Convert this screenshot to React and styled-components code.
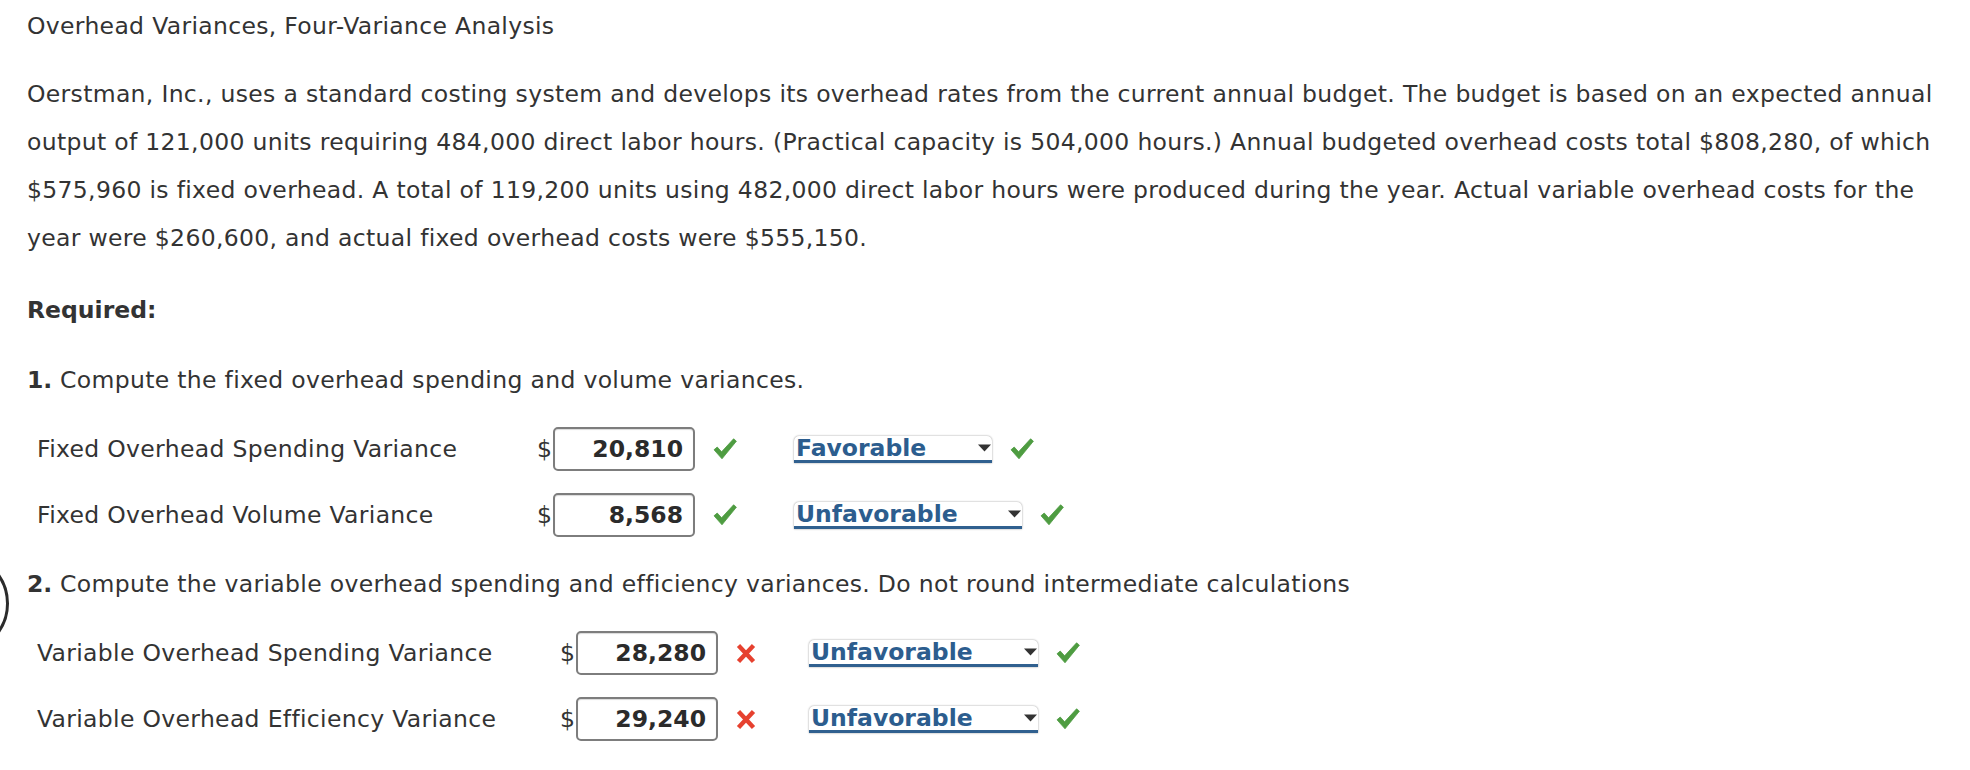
import React from "react";
import styled, { createGlobalStyle } from "styled-components";

const Global = createGlobalStyle`
  html, body { margin: 0; padding: 0; background: #fff; }
  body { font-family: "DejaVu Sans", Verdana, sans-serif; color: #333; }
`;

const Page = styled.div`
  position: relative;
  width: 1970px;
  height: 770px;
  box-sizing: border-box;
  padding: 2px 8px 0 27px;
  overflow: hidden;
  font-size: 23.5px;
  line-height: 48px;
  letter-spacing: 0.32px;
`;

const EdgeCircle = styled.div`
  position: absolute;
  left: -92px;
  top: 553px;
  width: 95px;
  height: 95px;
  border: 3.5px solid #2b2b2b;
  border-radius: 50%;
`;

const Title = styled.div``;

const Para = styled.p`
  margin: ${(p) => p.$mt}px 0 0 0;
`;

const Strong = styled.b`
  font-weight: 700;
  letter-spacing: 0;
`;

const Table = styled.div`
  display: flex;
  flex-direction: column;
  gap: 22px;
  margin-top: 23px;
`;

const Row = styled.div`
  display: flex;
  align-items: center;
  height: 44px;
`;

const Label = styled.div`
  width: ${(p) => p.$w}px;
  padding-left: 10px;
  box-sizing: border-box;
  flex: none;
  line-height: 44px;
`;

const Dollar = styled.span`
  width: 16px;
  flex: none;
  line-height: 44px;
`;

const ValueBox = styled.div`
  width: 142px;
  height: 44px;
  box-sizing: border-box;
  border: 2px solid #7d7d7d;
  border-radius: 5px;
  background: #fff;
  box-shadow: inset 0 1px 1px rgba(0, 0, 0, 0.15);
  display: flex;
  align-items: center;
  justify-content: flex-end;
  padding-right: 10px;
  font-weight: 700;
  letter-spacing: 0;
  color: #2b2b2b;
  flex: none;
`;

const Mark = styled.span`
  display: inline-flex;
  margin-left: ${(p) => p.$ml}px;
  flex: none;
`;

const Select = styled.div`
  display: flex;
  align-items: center;
  width: ${(p) => p.$w}px;
  margin-left: ${(p) => p.$ml}px;
  height: 27px;
  box-sizing: border-box;
  padding: 0 1px 0 2px;
  background: #fff;
  border-radius: 5px 5px 0 0;
  box-shadow: 0 0 2px rgba(0, 0, 0, 0.45);
  border-bottom: 3px solid #30608f;
  font-weight: 700;
  letter-spacing: 0;
  color: #2c5d8e;
  line-height: 24px;
  flex: none;
  white-space: nowrap;
`;

const SelectText = styled.span`
  flex: 1;
`;

const Check = ({ ml }) => (
  <Mark $ml={ml}>
    <svg width="24" height="22" viewBox="0 0 24 22">
      <path
        d="M1 11.8 L4.2 9 L8.6 13.8 L20.6 0.8 L23.4 3.2 L9 20.8 Z"
        fill="#4e9c41"
        stroke="#4e9c41"
        strokeWidth="0.8"
        strokeLinejoin="round"
      />
    </svg>
  </Mark>
);

const Cross = ({ ml }) => (
  <Mark $ml={ml}>
    <svg width="20" height="19" viewBox="0 0 20 19">
      <path
        d="M2.5 1.5 L17.5 17.5 M17.5 1.5 L2.5 17.5"
        fill="none"
        stroke="#e6412f"
        strokeWidth="4.4"
        strokeLinecap="butt"
      />
    </svg>
  </Mark>
);

const Arrow = () => (
  <svg width="13" height="8" viewBox="0 0 13 8">
    <path d="M0 0.5 H13 L6.5 7.5 Z" fill="#333" />
  </svg>
);

const AnswerRow = ({ label, labelW, value, correct, choice, selW, selGap }) => (
  <Row>
    <Label $w={labelW}>{label}</Label>
    <Dollar>$</Dollar>
    <ValueBox>{value}</ValueBox>
    {correct ? <Check ml={18} /> : <Cross ml={18} />}
    <Select $ml={selGap} $w={selW}>
      <SelectText>{choice}</SelectText>
      <Arrow />
    </Select>
    <Check ml={18} />
  </Row>
);

export default function App() {
  return (
    <>
      <Global />
      <Page>
        <EdgeCircle />
        <Title>Overhead Variances, Four-Variance Analysis</Title>
        <Para $mt={20}>
          Oerstman, Inc., uses a standard costing system and develops its overhead rates from the current annual budget. The budget is based on an expected annual output of 121,000 units requiring 484,000 direct labor hours. (Practical capacity is 504,000 hours.) Annual budgeted overhead costs total $808,280, of which $575,960 is fixed overhead. A total of 119,200 units using 482,000 direct labor hours were produced during the year. Actual variable overhead costs for the year were $260,600, and actual fixed overhead costs were $555,150.
        </Para>
        <Para $mt={24}>
          <Strong>Required:</Strong>
        </Para>
        <Para $mt={22}>
          <Strong>1.</Strong> Compute the fixed overhead spending and volume variances.
        </Para>
        <Table>
          <AnswerRow
            label="Fixed Overhead Spending Variance"
            labelW={510}
            value="20,810"
            correct
            choice="Favorable"
            selW={198}
            selGap={57}
          />
          <AnswerRow
            label="Fixed Overhead Volume Variance"
            labelW={510}
            value="8,568"
            correct
            choice="Unfavorable"
            selW={228}
            selGap={57}
          />
        </Table>
        <Para $mt={23}>
          <Strong>2.</Strong> Compute the variable overhead spending and efficiency variances. Do not round intermediate calculations
        </Para>
        <Table>
          <AnswerRow
            label="Variable Overhead Spending Variance"
            labelW={533}
            value="28,280"
            correct={false}
            choice="Unfavorable"
            selW={229}
            selGap={53}
          />
          <AnswerRow
            label="Variable Overhead Efficiency Variance"
            labelW={533}
            value="29,240"
            correct={false}
            choice="Unfavorable"
            selW={229}
            selGap={53}
          />
        </Table>
      </Page>
    </>
  );
}
